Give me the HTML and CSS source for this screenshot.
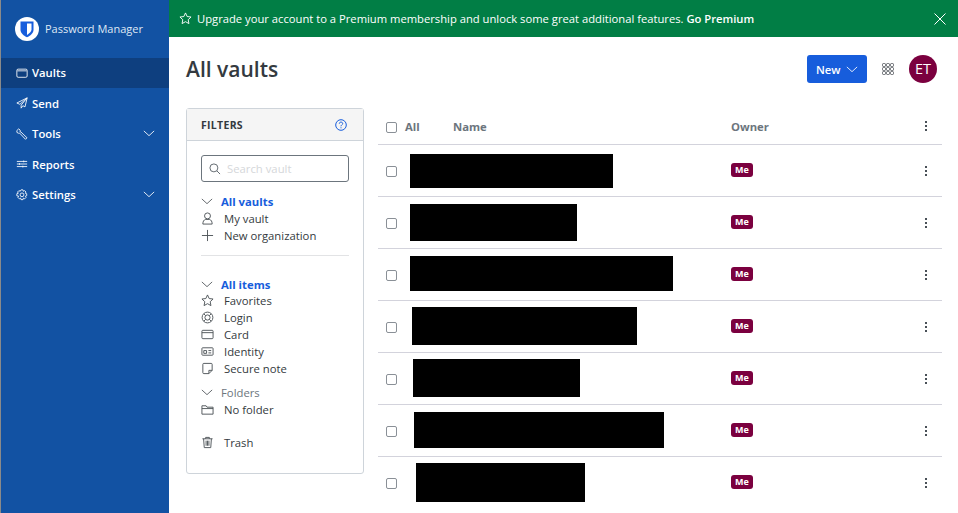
FILE: index.html
```html
<!DOCTYPE html>
<html lang="en">

<head>
  <meta charset="UTF-8">
  <title>All vaults</title>
  <link rel="stylesheet" href="styles.css">
</head>

<body>
  <!-- Sidebar -->
  <nav class="sidebar">
    <div class="brand">
      <span class="brand-logo">
        <svg width="24" height="24" viewBox="0 0 24 24"><path class="logo-shield" d="M5.500 4.500h13v8.200c0 3.600-3.400 6-6.500 7.600-3.100-1.600-6.500-4-6.500-7.600z"/><path class="logo-half" d="M12 6.500h4.500v6.100c0 2.300-2.300 4-4.500 5.300z"/></svg>
      </span>
      <span class="brand-name">Password Manager</span>
    </div>
    <a class="nav-item active">
      <svg class="nav-icon" viewBox="0 0 14 14"><rect x="1" y="2.500" width="12" height="9.500" rx="1.500"/><path d="M1.500 4.500h11"/></svg>
      Vaults
    </a>
    <a class="nav-item">
      <svg class="nav-icon" viewBox="0 0 14 14"><path d="M13 1 1 7l3.500 1.500L13 1 6 9.500V13l2-2.800 2.500 1.300z"/></svg>
      Send
    </a>
    <a class="nav-item">
      <svg class="nav-icon" viewBox="0 0 14 14"><path d="M1 3 3.200 1l1.700 1.500-.3 1.700 1.200.5 7 6.700-1.700 1.800-6.800-7.200-1.400.1-1.800-.9z"/></svg>
      Tools
      <svg class="nav-chevron" viewBox="0 0 14 8"><path d="M1 1l6 5.500L13 1"/></svg>
    </a>
    <a class="nav-item">
      <svg class="nav-icon" viewBox="0 0 14 14"><path d="M1 4h12M1 7h12M1 10h12M9 3v2M4 6v2M8 9v2"/></svg>
      Reports
    </a>
    <a class="nav-item">
      <svg class="nav-icon" viewBox="0 0 14 14"><path d="M5.800 1h2.400l.4 1.700 1.500-.8 1.600 1.600-.9 1.500 1.700.5v2.400l-1.700.5.900 1.500-1.600 1.600-1.500-.9-.4 1.800H5.800l-.4-1.800-1.500.9-1.600-1.600.9-1.500L1 8V5.500l1.700-.5-.9-1.500 1.600-1.600 1.500.8z"/><circle cx="7" cy="6.800" r="2.200"/></svg>
      Settings
      <svg class="nav-chevron" viewBox="0 0 14 8"><path d="M1 1l6 5.500L13 1"/></svg>
    </a>
  </nav>

  <div class="main">
    <!-- Banner -->
    <div class="banner">
      <svg class="banner-star" viewBox="0 0 14 14"><path d="M7 1l1.800 3.900 4.200.5-3.100 2.900.8 4.200L7 10.400 3.300 12.500l.8-4.200L1 5.400l4.200-.5z"/></svg>
      <span>Upgrade your account to a Premium membership and unlock some great additional features. <b>Go Premium</b></span>
      <svg class="banner-close" viewBox="0 0 12 12"><path d="M.5.500l11 11M11.500.500l-11 11"/></svg>
    </div>

    <div class="content">
      <header class="page-header">
        <h1>All vaults</h1>
        <button class="btn-new">New
          <svg viewBox="0 0 14 8"><path d="M1 1l6 5.500L13 1"/></svg>
        </button>
        <svg class="apps" viewBox="0 0 12 12">
          <rect x=".5" y=".5" width="3" height="3" rx="1"/><rect x="4.500" y=".5" width="3" height="3" rx="1"/><rect x="8.500" y=".5" width="3" height="3" rx="1"/>
          <rect x=".5" y="4.500" width="3" height="3" rx="1"/><rect x="4.500" y="4.500" width="3" height="3" rx="1"/><rect x="8.500" y="4.500" width="3" height="3" rx="1"/>
          <rect x=".5" y="8.500" width="3" height="3" rx="1"/><rect x="4.500" y="8.500" width="3" height="3" rx="1"/><rect x="8.500" y="8.500" width="3" height="3" rx="1"/>
        </svg>
        <span class="avatar">ET</span>
      </header>

      <div class="columns">
        <!-- Filters -->
        <aside class="filters">
          <div class="filters-head">
            <span>FILTERS</span>
            <svg class="help" viewBox="0 0 12 12"><circle cx="6" cy="6" r="5.300"/><path d="M4.300 4.700C4.300 3.700 5 3.100 6 3.100s1.700.6 1.700 1.500C7.700 5.800 6 5.900 6 7.300M6 8.300v1"/></svg>
          </div>
          <div class="filters-body">
            <div class="search">
              <svg viewBox="0 0 13 13"><circle cx="5.300" cy="5.300" r="4.300"/><path d="M8.500 8.500l3.500 3.500"/></svg>
              <span>Search vault</span>
            </div>

            <div class="filter-title"><svg viewBox="0 0 14 8"><path d="M1 1l6 5.500L13 1"/></svg>All vaults</div>
            <div class="filter-item">
              <svg viewBox="0 0 14 14"><circle cx="7" cy="4.200" r="3.200"/><path d="M2 13c0-3 1-4.500 3-5h4c2 .5 3 2 3 5z"/></svg>
              My vault
            </div>
            <div class="filter-item">
              <svg viewBox="0 0 14 14"><path d="M7 1v12M1 7h12"/></svg>
              New organization
            </div>
            <hr class="filter-line">

            <div class="filter-title"><svg viewBox="0 0 14 8"><path d="M1 1l6 5.500L13 1"/></svg>All items</div>
            <div class="filter-item">
              <svg viewBox="0 0 14 14"><path d="M7 1l1.800 3.900 4.200.5-3.100 2.900.8 4.200L7 10.400 3.300 12.500l.8-4.200L1 5.400l4.200-.5z"/></svg>
              Favorites
            </div>
            <div class="filter-item">
              <svg viewBox="0 0 14 14"><circle cx="7" cy="7" r="5.800"/><circle cx="7" cy="7" r="2.800"/><path d="M3 3l2 2M11 3 9 5M3 11l2-2M11 11 9 9"/></svg>
              Login
            </div>
            <div class="filter-item">
              <svg viewBox="0 0 14 14"><rect x="1" y="2.500" width="12" height="9" rx="1"/><path d="M1 5h12"/></svg>
              Card
            </div>
            <div class="filter-item">
              <svg viewBox="0 0 14 14"><rect x="1" y="3" width="12" height="8" rx=".8"/><path d="M3 9V6h3v3zM8 6h3M8 8.500h3"/></svg>
              Identity
            </div>
            <div class="filter-item">
              <svg viewBox="0 0 14 14"><path d="M2 2.500a1 1 0 0 1 1-1h8a1 1 0 0 1 1 1V9l-3.500 3.500H3a1 1 0 0 1-1-1zM12 9H8.500v3.500"/></svg>
              Secure note
            </div>

            <div class="filter-title folders"><svg viewBox="0 0 14 8"><path d="M1 1l6 5.500L13 1"/></svg>Folders</div>
            <div class="filter-item">
              <svg viewBox="0 0 14 14"><path d="M1 3h4.500l1 1.500H13V12H1zM1 6h12"/></svg>
              No folder
            </div>

            <div class="filter-item trash">
              <svg viewBox="0 0 14 14"><path d="M1.500 3h11M5 3V1.500h4V3M2.800 3l.7 9.500h7l.7-9.500M5.500 5v5.500M7 5v5.500M8.500 5v5.500"/></svg>
              Trash
            </div>
          </div>
        </aside>

        <!-- Vault list -->
        <section class="vault">
          <div class="row head">
            <span class="check"></span>
            <span class="col-all">All</span>
            <span class="col-name">Name</span>
            <span class="col-owner">Owner</span>
            <span class="dots"><i></i><i></i><i></i></span>
          </div>
          <div class="row"><span class="check"></span><span class="redact r1"></span><span class="col-owner"><span class="badge">Me</span></span><span class="dots"><i></i><i></i><i></i></span></div>
          <div class="row"><span class="check"></span><span class="redact r2"></span><span class="col-owner"><span class="badge">Me</span></span><span class="dots"><i></i><i></i><i></i></span></div>
          <div class="row"><span class="check"></span><span class="redact r3"></span><span class="col-owner"><span class="badge">Me</span></span><span class="dots"><i></i><i></i><i></i></span></div>
          <div class="row"><span class="check"></span><span class="redact r4"></span><span class="col-owner"><span class="badge">Me</span></span><span class="dots"><i></i><i></i><i></i></span></div>
          <div class="row"><span class="check"></span><span class="redact r5"></span><span class="col-owner"><span class="badge">Me</span></span><span class="dots"><i></i><i></i><i></i></span></div>
          <div class="row"><span class="check"></span><span class="redact r6"></span><span class="col-owner"><span class="badge">Me</span></span><span class="dots"><i></i><i></i><i></i></span></div>
          <div class="row"><span class="check"></span><span class="redact r7"></span><span class="col-owner"><span class="badge">Me</span></span><span class="dots"><i></i><i></i><i></i></span></div>
        </section>
      </div>
    </div>
  </div>
</body>

</html>
```

FILE: styles.css
```css
html,
body {
  height: 100%;
}

body {
  font-family: "Open Sans", sans-serif;
  font-size: 11.300px;
  margin: 0;
  color: #212529;
  background-color: #fff;
  display: flex;
  overflow: hidden;
}

svg {
  fill: none;
  stroke: currentColor;
  stroke-width: 1;
  flex: none;
}

/* Sidebar */
.sidebar {
  width: 168px;
  flex: none;
  border-left: 1px solid #8a8a8a;
  background-color: #1252a3;
  color: #fff;
}

.brand {
  display: flex;
  align-items: center;
  gap: 6px;
  height: 57.600px;
  padding-left: 14px;
}

.brand-logo {
  width: 24px;
  height: 24px;
  border-radius: 50%;
  background-color: #fff;
}

.logo-shield {
  fill: #175ddc;
  stroke: none;
}

.logo-half {
  fill: #fff;
  stroke: none;
}

.brand-name {
  font-size: 11px;
  color: #dfe8f4;
}

.nav-item {
  display: flex;
  align-items: center;
  gap: 4px;
  height: 30.500px;
  padding: 0 14px 0 15px;
  font-weight: 600;
}

.nav-item.active {
  background-color: #0e3f7f;
}

.nav-icon {
  width: 12px;
  height: 12px;
}

.nav-chevron {
  width: 12px;
  height: 7px;
  margin-left: auto;
}

/* Main */
.main {
  flex: 1;
  min-width: 0;
}

.banner {
  display: flex;
  align-items: center;
  height: 37px;
  padding: 0 12px 0 10px;
  background-color: #017e45;
  color: #fff;
  font-size: 11.220px;
}

.banner b {
  font-weight: 600;
}

.banner-star {
  width: 13px;
  height: 13px;
  margin-right: 5px;
}

.banner-close {
  width: 12px;
  height: 12px;
  margin-left: auto;
}

.content {
  padding: 0 16px 0 17px;
}

.page-header {
  display: flex;
  align-items: center;
  height: 64px;
  padding-right: 5px;
}

.page-header h1 {
  font-size: 21px;
  font-weight: 600;
  color: #343a40;
  margin: 0 auto 0 0;
}

.btn-new {
  display: flex;
  align-items: center;
  gap: 5px;
  height: 28px;
  width: 60px;
  padding: 0 0 0 9px;
  border: none;
  border-radius: 3px;
  background-color: #175ddc;
  color: #fff;
  font: 600 11.300px "Open Sans", sans-serif;
}

.btn-new svg {
  width: 12px;
  height: 7px;
}

.apps {
  width: 12px;
  height: 12px;
  margin: 0 15px;
  color: #5a5f64;
}

.avatar {
  width: 28px;
  height: 28px;
  border-radius: 50%;
  background-color: #7b003f;
  color: #fff;
  font-size: 14.500px;
  line-height: 28px;
  text-align: center;
}

.columns {
  display: flex;
  align-items: flex-start;
  gap: 14px;
  margin-top: 7px;
}

/* Filters */
.filters {
  width: 178px;
  height: 366px;
  flex: none;
  box-sizing: border-box;
  border: 1px solid #ced4da;
  border-radius: 3px;
}

.filters-head {
  display: flex;
  align-items: center;
  justify-content: space-between;
  box-sizing: border-box;
  height: 32px;
  padding: 0 16px 0 14px;
  background-color: #f5f5f5;
  border-bottom: 1px solid #ced4da;
  font-size: 10.500px;
  font-weight: 700;
  letter-spacing: .3px;
  color: #343a40;
}

.help {
  width: 12px;
  height: 12px;
  color: #175ddc;
}

.filters-body {
  padding: 14px 14px 0;
}

.search {
  display: flex;
  align-items: center;
  gap: 6px;
  height: 25px;
  padding-left: 7px;
  border: 1px solid #6c757d;
  border-radius: 3px;
  color: #d5d7da;
  margin-bottom: 11px;
}

.search svg {
  width: 12px;
  height: 12px;
  color: #5a6268;
}

.filter-title {
  display: flex;
  align-items: center;
  height: 17px;
  font-weight: 700;
  color: #175ddc;
}

.filter-line + .filter-title {
  height: 16px;
}

.filter-title svg {
  width: 12px;
  height: 7px;
  margin-right: 8px;
  color: #4d5358;
}

.filter-title.folders {
  margin-top: 7px;
  font-weight: 400;
  color: #6c757d;
}

.filter-item {
  display: flex;
  align-items: center;
  gap: 10px;
  height: 17px;
  color: #343a40;
}

.filter-item svg {
  width: 13px;
  height: 13px;
  color: #4d5358;
}

.filter-item.trash {
  margin-top: 16px;
}

.filter-line {
  border: none;
  border-top: 1px solid #e2e3e5;
  margin: 11px 0 20px;
}

/* Vault list */
.vault {
  flex: 1;
  min-width: 0;
}

.row {
  display: flex;
  align-items: center;
  height: 51px;
  border-bottom: 1px solid #d3d3dc;
  padding-left: 8px;
}

.row:last-child {
  border-bottom: none;
}

.row.head {
  height: 36px;
  font-weight: 700;
  color: #6c757d;
}

.check {
  width: 9px;
  height: 9px;
  margin-top: 2px;
  border: 1px solid #8a9097;
  border-radius: 2px;
  flex: none;
}

.col-all {
  margin-left: 8px;
  width: 48px;
}

.col-name {
  width: 278px;
}

.col-owner {
  flex: 1;
}

.row .col-owner:has(.badge) {
  padding-bottom: 1px;
}

.redact {
  background-color: #000;
  flex: none;
  align-self: flex-start;
}

.r1 { width: 203px; height: 34px; margin: 9px 118px 0 13px; }
.r2 { width: 167px; height: 37px; margin: 7px 154px 0 13px; }
.r3 { width: 263px; height: 35px; margin: 7px 58px 0 13px; }
.r4 { width: 225px; height: 38px; margin: 6px 94px 0 15px; }
.r5 { width: 167px; height: 38px; margin: 6px 151px 0 16px; }
.r6 { width: 250px; height: 36px; margin: 7px 67px 0 17px; }
.r7 { width: 169px; height: 39px; margin: 6px 146px 0 19px; }

.badge {
  display: block;
  width: 22px;
  height: 14px;
  border-radius: 3px;
  background-color: #7b003f;
  color: #fff;
  font-size: 9px;
  font-weight: 700;
  line-height: 14px;
  text-align: center;
}

.dots {
  display: flex;
  flex-direction: column;
  gap: 2px;
  width: 17px;
  align-items: center;
  margin-right: 8px;
  flex: none;
}

.dots i {
  width: 2px;
  height: 2px;
  background-color: #495057;
}
```
